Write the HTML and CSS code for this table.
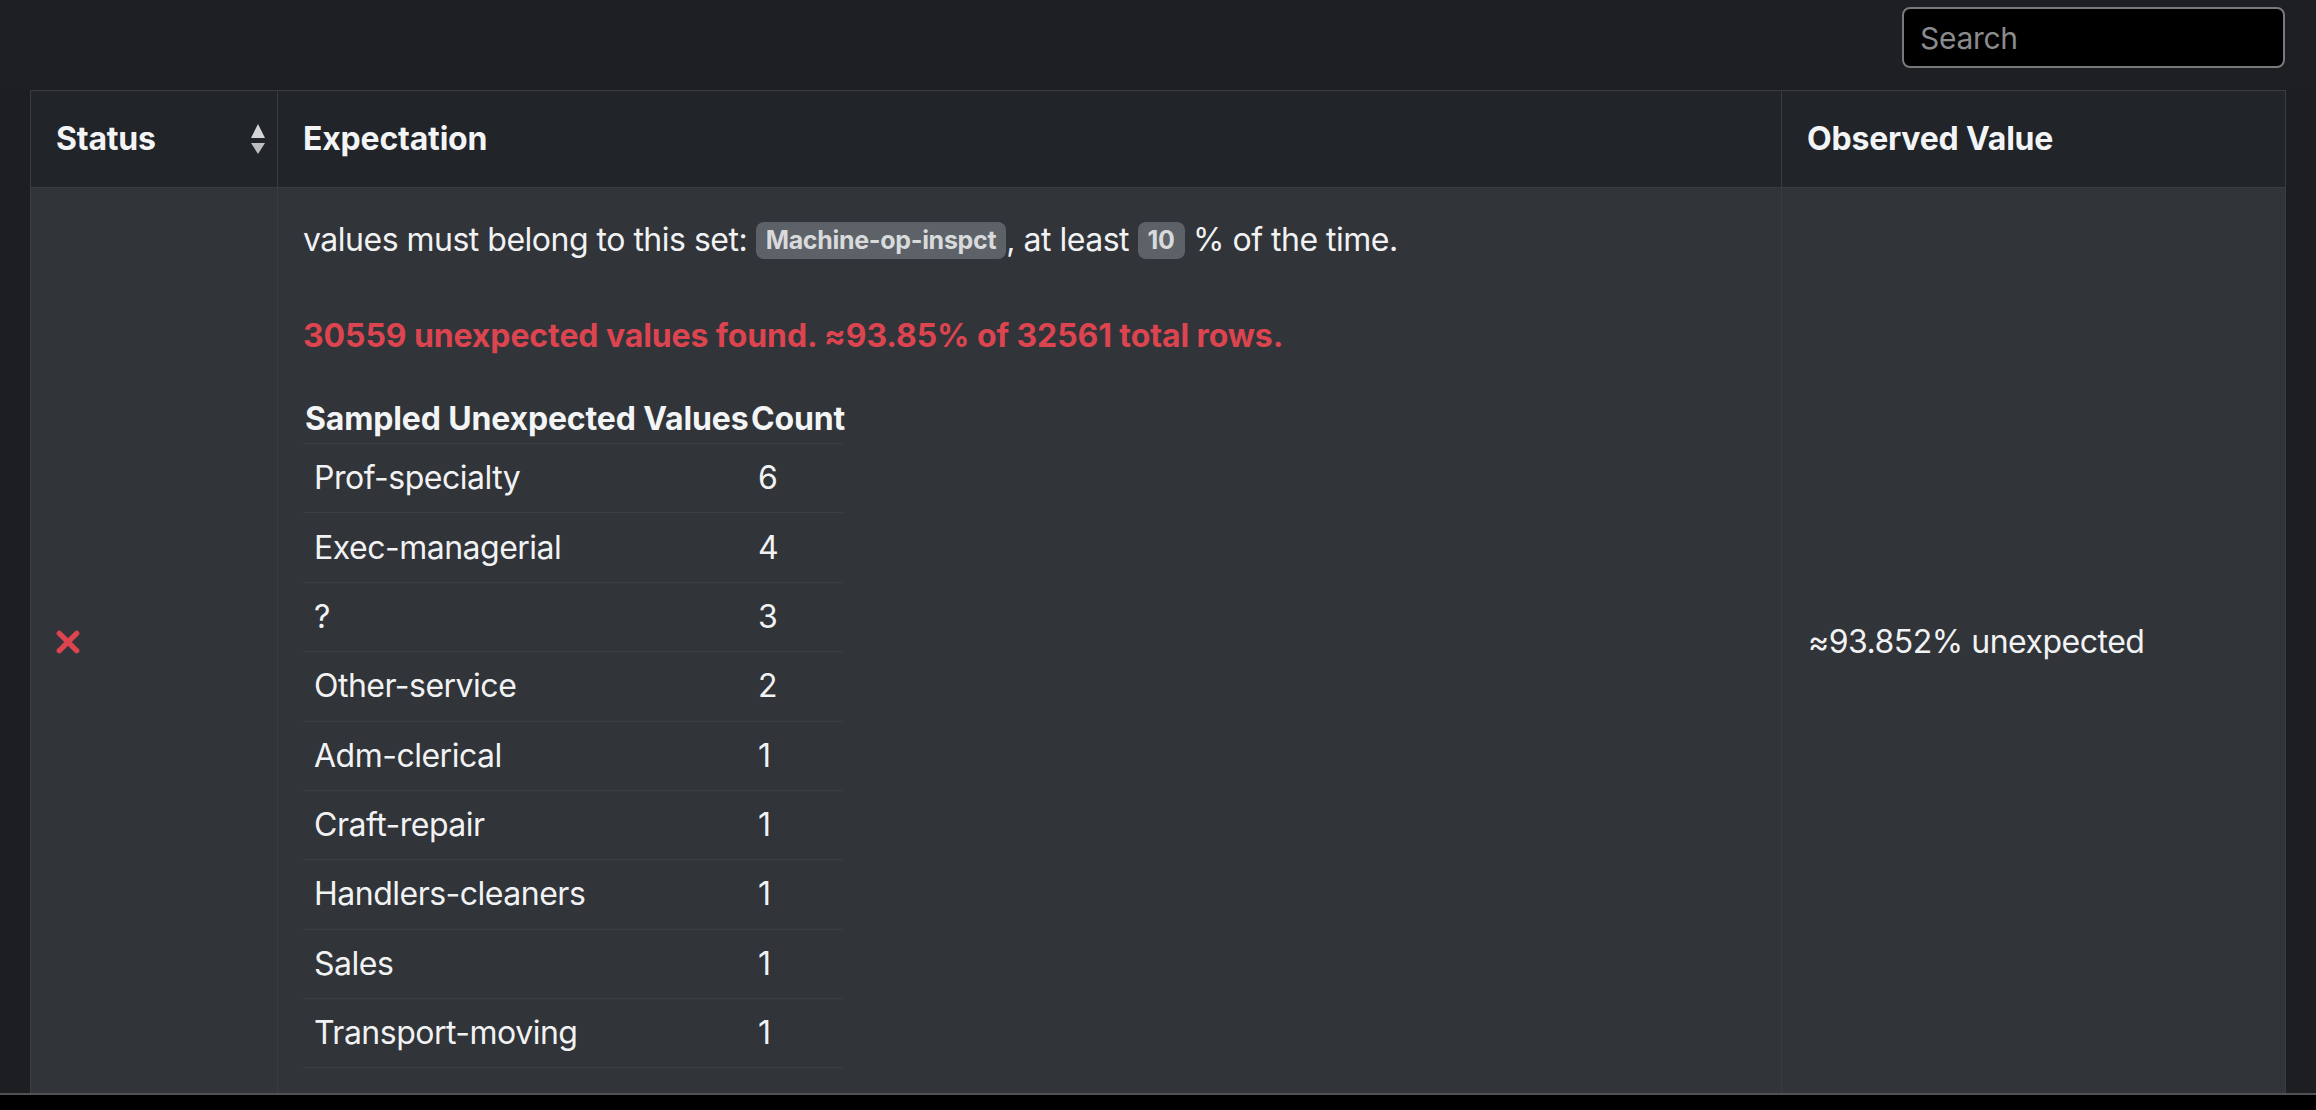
FILE: index.html
```html
<!DOCTYPE html>
<html lang="en">
<head>
<meta charset="utf-8">
<title>Validation results</title>
<link rel="stylesheet" href="styles.css">
</head>
<body>
<div class="page">
  <div class="toolbar">
    <input class="search" type="text" placeholder="Search">
  </div>
  <div class="table-wrap">
    <table class="results">
      <colgroup>
        <col class="c-status">
        <col class="c-exp">
        <col class="c-obs">
      </colgroup>
      <thead>
        <tr>
          <th class="th-status">
            <div class="th-inner">
              <span>Status</span>
              <svg class="sort" width="14" height="30" viewBox="0 0 14 30" aria-hidden="true">
                <polygon class="sort-up" points="7,0 14,14 0,14"/>
                <polygon class="sort-down" points="0,19 14,19 7,30"/>
              </svg>
            </div>
          </th>
          <th class="th-exp">Expectation</th>
          <th class="th-obs">Observed Value</th>
        </tr>
      </thead>
      <tbody>
        <tr>
          <td class="td-status">
            <svg class="fail" width="24" height="24" viewBox="0 0 24 24" aria-hidden="true">
              <line x1="4" y1="4" x2="20" y2="20"/>
              <line x1="20" y1="4" x2="4" y2="20"/>
            </svg>
          </td>
          <td class="td-exp">
            <div class="exp-line">values must belong to this set: <span class="badge">Machine-op-inspct</span>, at least <span class="badge">10</span> % of the time.</div>
            <div class="unexpected">30559 unexpected values found. ≈93.85% of 32561 total rows.</div>
            <table class="samples">
              <colgroup>
                <col class="s-val">
                <col class="s-count">
              </colgroup>
              <thead>
                <tr><th>Sampled Unexpected Values</th><th>Count</th></tr>
              </thead>
              <tbody>
                <tr><td>Prof-specialty</td><td>6</td></tr>
                <tr><td>Exec-managerial</td><td>4</td></tr>
                <tr><td>?</td><td>3</td></tr>
                <tr><td>Other-service</td><td>2</td></tr>
                <tr><td>Adm-clerical</td><td>1</td></tr>
                <tr><td>Craft-repair</td><td>1</td></tr>
                <tr><td>Handlers-cleaners</td><td>1</td></tr>
                <tr><td>Sales</td><td>1</td></tr>
                <tr><td>Transport-moving</td><td>1</td></tr>
              </tbody>
            </table>
          </td>
          <td class="td-obs">≈93.852% unexpected</td>
        </tr>
      </tbody>
    </table>
  </div>
  <div class="bottom-bar"></div>
</div>
</body>
</html>
```

FILE: styles.css
```css
* { box-sizing: border-box; }

html, body {
  margin: 0;
  padding: 0;
  background: #1c1e21;
  font-family: "Inter", "Noto Sans", sans-serif;
  color: #f1f2f3;
}

.page {
  width: 2316px;
  height: 1110px;
  display: flex;
  flex-direction: column;
  overflow: hidden;
}

.toolbar {
  height: 90px;
  flex: none;
  display: flex;
  justify-content: flex-end;
  align-items: flex-start;
  padding: 7px 31px 0 0;
  background: #1d1f22;
}

.search {
  width: 383px;
  height: 61px;
  background: #000;
  border: 2px solid #77797c;
  border-radius: 8px;
  padding: 0 16px;
  font-family: inherit;
  font-size: 30px;
  letter-spacing: -0.3px;
  color: #e0e0e0;
  outline: none;
}
.search::placeholder { color: #8a8b8d; }

.table-wrap {
  flex: 1;
  overflow: hidden;
  padding: 0 31px 0 30px;
}

.results {
  width: 2255px;
  table-layout: fixed;
  border-collapse: collapse;
  font-size: 32px;
  line-height: 48px;
  letter-spacing: -0.5px;
}
.c-status { width: 247px; }
.c-exp { width: 1504px; }
.c-obs { width: 504px; }

.results > thead > tr > th {
  background: #212428;
  border: 1px solid #393c40;
  padding: 24px 24px 24px 25px;
  text-align: left;
  font-weight: 700;
  letter-spacing: -0.2px;
  color: #f3f4f5;
  height: 97px;
}
.results > thead > tr > th.th-status { padding-right: 12px; }

.th-inner {
  display: flex;
  justify-content: space-between;
  align-items: center;
}
.sort { display: block; }
.sort-up { fill: #d4d5d6; }
.sort-down { fill: #bcbdbf; }

.results > tbody > tr > td {
  background: #313438;
  border: 1px solid #35383c;
  border-left-color: #393c40;
  border-right-color: #393c40;
  vertical-align: middle;
  color: #f1f2f3;
}

.td-status { padding: 0 0 0 24px; }
.fail { display: block; width: 26px; height: 26px; }
.fail line {
  stroke: #dc4450;
  stroke-width: 5;
  stroke-linecap: round;
}

.td-exp {
  padding: 28px 24px 27px 25px;
  vertical-align: top !important;
}

.exp-line { line-height: 48px; }

.badge {
  display: inline-block;
  background: #5d6268;
  color: #d8dadc;
  font-size: 25px;
  font-weight: 700;
  letter-spacing: -0.3px;
  line-height: 25px;
  padding: 6px 10px;
  border-radius: 8px;
  vertical-align: 2px;
}

.unexpected {
  margin-top: 48px;
  margin-bottom: 35px;
  color: #dc4450;
  font-weight: 700;
  letter-spacing: -0.1px;
}

.samples {
  border-collapse: collapse;
  table-layout: fixed;
  width: 540px;
}
.s-val { width: 446px; }
.s-count { width: 94px; }

.samples th {
  text-align: left;
  padding: 0 0 0 2px;
  font-weight: 700;
  letter-spacing: -0.15px;
  white-space: nowrap;
  color: #f3f4f5;
}

.samples td {
  padding: 10.2px 10px 10.2px 11px;
  border-top: 1px solid #3b3e42;
  white-space: nowrap;
}
.samples tr:last-child td { border-bottom: 1px solid #3b3e42; }
.samples td + td { padding-left: 9px; }

.td-obs { padding: 0 24px 0 26px; }

.bottom-bar {
  flex: none;
  height: 17px;
  background: #000;
  border-top: 2px solid #4f5255;
}
```
